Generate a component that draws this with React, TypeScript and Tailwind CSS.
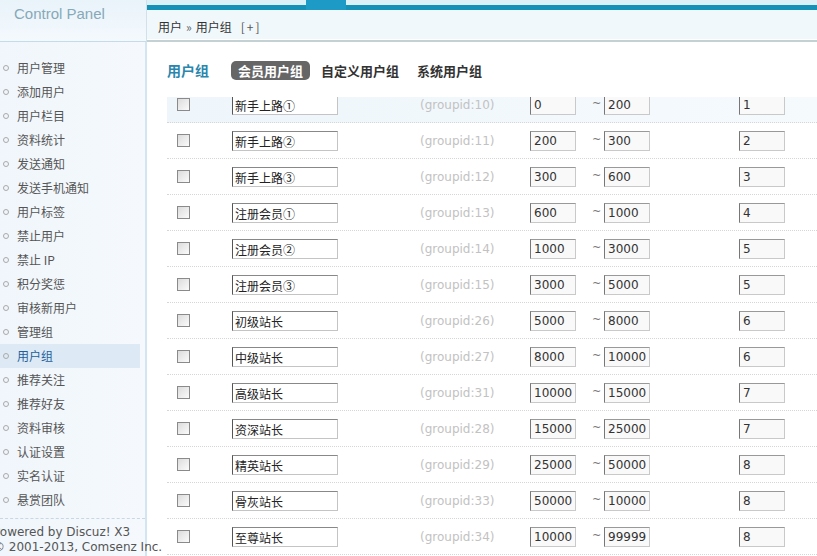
import React from 'react';

const menu = [
  '用户管理', '添加用户', '用户栏目', '资料统计', '发送通知', '发送手机通知', '用户标签',
  '禁止用户', '禁止 IP', '积分奖惩', '审核新用户', '管理组', '用户组', '推荐关注',
  '推荐好友', '资料审核', '认证设置', '实名认证', '悬赏团队',
];

const groups = [
  { name: '新手上路①', id: 10, min: '0', max: '200', stars: '1' },
  { name: '新手上路②', id: 11, min: '200', max: '300', stars: '2' },
  { name: '新手上路③', id: 12, min: '300', max: '600', stars: '3' },
  { name: '注册会员①', id: 13, min: '600', max: '1000', stars: '4' },
  { name: '注册会员②', id: 14, min: '1000', max: '3000', stars: '5' },
  { name: '注册会员③', id: 15, min: '3000', max: '5000', stars: '5' },
  { name: '初级站长', id: 26, min: '5000', max: '8000', stars: '6' },
  { name: '中级站长', id: 27, min: '8000', max: '10000', stars: '6' },
  { name: '高级站长', id: 31, min: '10000', max: '15000', stars: '7' },
  { name: '资深站长', id: 28, min: '15000', max: '25000', stars: '7' },
  { name: '精英站长', id: 29, min: '25000', max: '50000', stars: '8' },
  { name: '骨灰站长', id: 33, min: '50000', max: '10000', stars: '8' },
  { name: '至尊站长', id: 34, min: '10000', max: '99999', stars: '8' },
];

const cjk = "font-['Noto_Sans_CJK_SC',sans-serif]";
const latin = "font-['DejaVu_Sans','Noto_Sans_CJK_SC',sans-serif]";

function NumInput({ value }: { value: string }) {
  return (
    <input
      readOnly
      value={value}
      className={`${latin} h-[20px] w-[46px] border border-[#c9c9c9] border-l-[#777] border-t-[#999] bg-[#f9f9f9] px-[3px] text-[12px] text-[#333] outline-none`}
    />
  );
}

export default function App() {
  return (
    <div className="flex h-[556px] w-[817px] flex-col overflow-hidden bg-white">
      {/* top strip */}
      <div className="flex h-[42px] shrink-0">
        <div className="w-[146px] shrink-0 border-b border-[#c6dbea] bg-gradient-to-b from-[#e9f3fa] to-[#f4f9fd] pl-[14px] pt-[1px]">
          <span className="font-['Liberation_Sans',sans-serif] text-[15px] text-[#86a9b8]">Control Panel</span>
        </div>
        <div className="flex flex-1 flex-col border-l border-[#d2e0e8]">
          <div className="flex h-[10px] bg-[#dcf0f7]">
            <div className="mt-[5px] h-[5px] w-[159px] bg-[#1590b6]" />
            <div className="h-[10px] w-[40px] bg-[#1e9ac7]" />
            <div className="mt-[5px] h-[5px] flex-1 bg-[#1590b6]" />
          </div>
          <div className={`${cjk} flex h-[32px] items-center border-b-2 border-[#c3d1d4] bg-[#f1f8fc] pl-[11px] pt-[4px] text-[12px] text-[#333] shadow-[inset_0_-1px_0_#fff]`}>
            用户 <span className="mx-[4px] text-[12px] text-[#666]">»</span> 用户组
            <span className="ml-[9px] tracking-[2px] text-[#555]">[+]</span>
          </div>
        </div>
      </div>

      <div className="flex min-h-0 flex-1">
        {/* sidebar */}
        <div className="w-[147px] shrink-0 border-r-2 border-[#d3e4f2] bg-gradient-to-r from-[#f0f6fb] to-[#f5f9fd] pt-[14px]">
          <ul className="pr-[5px]">
            {menu.map((m) => {
              const active = m === '用户组';
              return (
                <li
                  key={m}
                  className={`${cjk} flex h-[24px] items-center text-[12px] ${active ? 'bg-[#dde9f4] text-[#1f5f9c]' : 'text-[#555]'}`}
                >
                  <span className="ml-[3px] mr-[8px] h-[6px] w-[6px] rounded-full border border-[#aaa]" />
                  {m}
                </li>
              );
            })}
          </ul>
          <div className="mt-[6px] border-t border-dashed border-[#c9d7e1] pr-[3px] pt-[6px]">
            <p className={`${latin} -ml-[7px] whitespace-nowrap text-[12px] leading-[15px] text-[#555]`}>Powered by Discuz! X3</p>
            <p className={`${latin} -ml-[7px] whitespace-nowrap text-[12px] leading-[15px] text-[#555]`}>© 2001-2013, Comsenz Inc.</p>
          </div>
        </div>

        {/* main */}
        <div className="flex min-w-0 flex-1 flex-col pl-[20px]">
          <div className={`${cjk} flex h-[55px] shrink-0 items-start pt-[19px]`}>
            <h3 className="mr-[22px] text-[14px] font-bold leading-[19px] text-[#2a86ad]">用户组</h3>
            <span className="mr-[4px] rounded-[5px] bg-[#666] px-[7px] text-[13px] font-bold leading-[19px] text-white">会员用户组</span>
            <span className="mr-[4px] px-[7px] text-[13px] font-bold leading-[19px] text-[#333]">自定义用户组</span>
            <span className="px-[7px] text-[13px] font-bold leading-[19px] text-[#333]">系统用户组</span>
          </div>
          <div className="min-h-0 flex-1 overflow-hidden">
            <div className="-mt-[10px]">
              {groups.map((g, i) => (
                <div
                  key={g.id}
                  className={`flex h-[36px] items-center border-b border-dotted border-[#d6d6d6] ${i === 0 ? 'bg-gradient-to-r from-[#eef6fb] to-[#f5fafd]' : ''}`}
                >
                  <div className="w-[65px] shrink-0 pl-[10px]">
                    <span className="block h-[13px] w-[13px] border border-[#8a8a8a] bg-gradient-to-br from-[#dcdcdc] to-[#fbfbfb]" />
                  </div>
                  <div className="w-[188px] shrink-0">
                    <input
                      readOnly
                      value={g.name}
                      className={`${cjk} h-[20px] w-[106px] border border-[#c4c4c4] border-l-[#555] border-t-[#888] bg-white px-[2px] text-[12px] text-[#222] outline-none`}
                    />
                  </div>
                  <div className={`${latin} w-[110px] shrink-0 text-[12px] text-[#c2c2c2]`}>(groupid:{g.id})</div>
                  <NumInput value={g.min} />
                  <div className={`${latin} w-[28px] shrink-0 pl-[16px] text-[11px] text-[#777]`}>~</div>
                  <NumInput value={g.max} />
                  <div className="w-[89px] shrink-0" />
                  <NumInput value={g.stars} />
                </div>
              ))}
            </div>
          </div>
        </div>
      </div>
    </div>
  );
}
